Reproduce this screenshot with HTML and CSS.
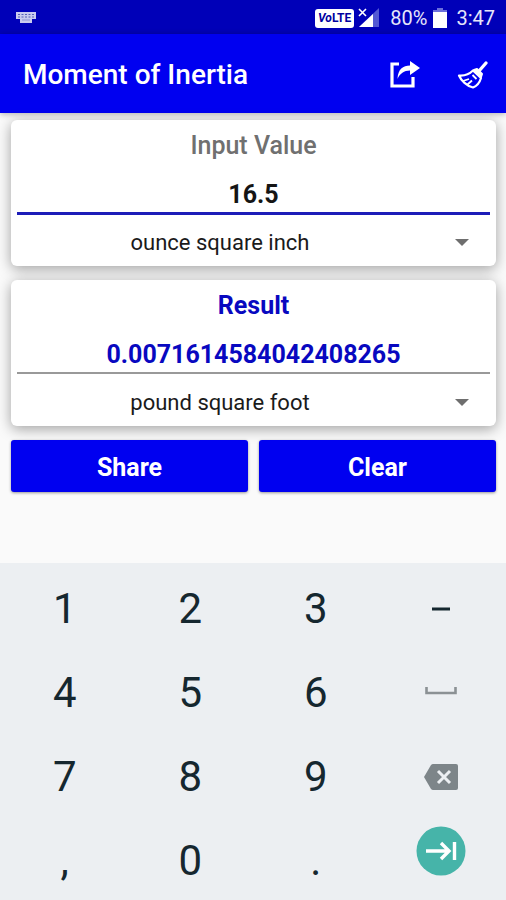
FILE: index.html
```html
<!DOCTYPE html>
<html lang="en">
<head>
<meta charset="utf-8">
<meta name="viewport" content="width=device-width, initial-scale=1">
<title>Moment of Inertia</title>
<link rel="stylesheet" href="styles.css">
</head>
<body>
<div class="status">
  <svg class="status-keyboard" width="20" height="12" viewBox="0 0 20 12" aria-hidden="true"><path d="M0 0h20v7h-4v4H4V7H0z" fill="#c9cbee"/><path d="M2 2.5h16M2 5h16" stroke="#5560b8" stroke-dasharray="2 1.5"/><path d="M6 8h8" stroke="#8f96d4"/></svg>
  <div class="status-right">
    <span class="volte"><i>Vo</i>LTE</span>
    <svg class="signal" width="22" height="22" viewBox="0 0 22 22" aria-hidden="true"><path d="M21 1v19H1z" fill="#5258d4"/><path d="M15 7v13H1z" fill="#fff"/><path d="M1 2l7 7M8 2L1 9" stroke="#fff" stroke-width="1.6"/></svg>
    <span>80%</span>
    <svg class="battery" width="14" height="20" viewBox="0 0 14 20" aria-hidden="true"><path d="M4 0h6v2h4v4H0V2h4z" fill="#6c70dc"/><path d="M0 4h14v16H0z" fill="#fff"/></svg>
    <span>3:47</span>
  </div>
</div>
<header class="appbar">
  <h1>Moment of Inertia</h1>
  <button class="action" type="button" aria-label="Share result"><svg width="32" height="28" viewBox="0 0 32 28"><path d="M10 3H3v22h21v-9" fill="none" stroke="#fff" stroke-width="3.2"/><path d="M8.500 18C9 8 14 4.500 21 4.500V0l10 7-10 7V9.500c-6 0-10 3-12.500 8.500z" fill="#fff"/></svg></button>
  <button class="action" type="button" aria-label="Clear values"><svg width="32" height="30" viewBox="0 0 32 30"><path d="M29 3l-7 8" stroke="#fff" stroke-width="3.400" stroke-linecap="round"/><path d="M17 10l3-1 5 5-1 3z" fill="#fff" stroke="#fff" stroke-width="2" stroke-linejoin="round"/><path d="M16 10.500c-4 4-9 5.500-14 5 2 5 8 10.500 14 12 5-2 7-6 8-9.500z" fill="none" stroke="#fff" stroke-width="2.200" stroke-linejoin="round"/><path d="M6 21l6-2M10.500 24.500l4.500-4M15.500 15l4 4" stroke="#fff" stroke-width="1.800"/></svg></button>
</header>
<main class="content">
  <section class="card">
    <label class="card-title" for="value">Input Value</label>
    <input class="value" id="value" type="text" inputmode="decimal" value="16.5">
    <div class="picker">
      <select aria-label="Input unit"><option>ounce square inch</option><option>pound square foot</option></select>
      <svg width="14" height="8" viewBox="0 0 14 8" aria-hidden="true"><path d="M0 0h14L7 7z" fill="#6e6e6e"/></svg>
    </div>
  </section>
  <section class="card result">
    <label class="card-title" for="result">Result</label>
    <input class="value" id="result" type="text" value="0.0071614584042408265" readonly>
    <div class="picker">
      <select aria-label="Result unit"><option>pound square foot</option><option>ounce square inch</option></select>
      <svg width="14" height="8" viewBox="0 0 14 8" aria-hidden="true"><path d="M0 0h14L7 7z" fill="#6e6e6e"/></svg>
    </div>
  </section>
  <div class="buttons">
    <button type="button">Share</button>
    <button type="button">Clear</button>
  </div>
</main>
<div class="keypad">
  <button type="button">1</button><button type="button">2</button><button type="button">3</button>
  <button type="button" aria-label="Minus"><svg width="18" height="4" viewBox="0 0 18 4"><path d="M0 2h18" stroke="#15272f" stroke-width="3"/></svg></button>
  <button type="button">4</button><button type="button">5</button><button type="button">6</button>
  <button type="button" aria-label="Space"><svg width="32" height="12" viewBox="0 0 32 12"><path d="M1.500 0v6h29V0" fill="none" stroke="#8b9194" stroke-width="2.600"/></svg></button>
  <button type="button">7</button><button type="button">8</button><button type="button">9</button>
  <button type="button" aria-label="Backspace"><svg width="34" height="26" viewBox="0 0 34 26"><path d="M9 0h23q2 0 2 2v22q0 2-2 2H9q-1 0-2-1L0 13 7 1q1-1 2-1z" fill="#7d8589"/><path d="M14 7l12 12M26 7L14 19" stroke="#eceff2" stroke-width="3"/></svg></button>
  <button type="button">,</button><button type="button">0</button><button type="button">.</button>
  <button type="button" class="next" aria-label="Next"><svg width="50" height="50" viewBox="0 0 50 50"><circle cx="25" cy="25" r="24.500" fill="#46b4a9"/><path d="M10 25h22M25 17l8 8-8 8M38.500 16v18" fill="none" stroke="#fff" stroke-width="3.400"/></svg></button>
</div>
</body>
</html>
```
FILE: styles.css
```css
* { box-sizing: border-box; }
body {
  margin: 0;
  min-height: 100vh;
  display: flex;
  flex-direction: column;
  background: #fafafa;
  color: #151515;
  font-family: Roboto, sans-serif;
}
button, input, select { font: inherit; color: inherit; border: 0; margin: 0; padding: 0; border-radius: 0; background: none; }
svg { display: block; }

.status {
  display: flex;
  align-items: center;
  justify-content: space-between;
  height: 34px;
  padding: 2px 11px 0 16px;
  background: #0000b8;
  color: #e6e6fa;
  font-size: 20px;
}
.status-right { display: flex; align-items: center; }
.volte {
  padding: 0 3px;
  margin-right: 4px;
  border-radius: 3px;
  background: #fff;
  color: #0000a0;
  font-size: 12px;
  font-weight: 700;
  line-height: 19px;
}
.signal { margin-right: 10px; }
.battery { margin: 0 9px 0 6px; }

.appbar {
  display: flex;
  align-items: center;
  height: 79px;
  padding: 2px 17px 0 23px;
  gap: 36px;
  background: #0000f0;
  color: #fff;
  box-shadow: 0 1px 6px rgba(0, 0, 0, .3);
}
.appbar h1 { flex: 1; margin: 0; font-size: 28px; font-weight: 500; }

.content { flex: 1; padding: 7px 10px 20px 11px; }
.card {
  margin-bottom: 14px;
  padding: 0 6px;
  border-radius: 6px;
  background: #fff;
  box-shadow: 0 3px 14px rgba(0, 0, 0, .36);
}
.card-title {
  display: block;
  height: 51px;
  line-height: 52px;
  text-align: center;
  font-size: 25px;
  font-weight: 500;
  color: #707070;
}
.value {
  display: block;
  width: 100%;
  height: 44px;
  padding-top: 5px;
  border-bottom: 3px solid #1c1cb8;
  text-align: center;
  font-size: 25px;
  font-weight: 700;
  outline: none;
}
.result .card-title, .result .value { color: #0808c0; font-weight: 700; }
.result .value { border-bottom: 2px solid #999; height: 43px; margin-bottom: 1px; }
.picker { display: grid; align-items: center; }
.picker select {
  grid-area: 1 / 1;
  width: 100%;
  height: 51px;
  padding: 4px 67px 0 0;
  appearance: none;
  text-align-last: center;
  font-size: 22px;
  color: #1a1a1a;
}
.picker svg { grid-area: 1 / 1; justify-self: end; margin: 4px 21px 0 0; pointer-events: none; }

.buttons { display: grid; grid-template-columns: 1fr 1fr; gap: 11px; }
.buttons button {
  height: 52px;
  padding-top: 2px;
  border-radius: 3px;
  background: #0000f0;
  box-shadow: 0 1px 3px rgba(0, 0, 0, .4);
  color: #fff;
  font-size: 25px;
  font-weight: 700;
}

.keypad {
  display: grid;
  grid-template-columns: repeat(4, 1fr);
  grid-auto-rows: 84px;
  padding: 0 2px 1px;
  background: #eceff2;
  color: #15272f;
  font-size: 42px;
}
.keypad button { display: grid; place-items: center; padding-top: 7px; }
.keypad .next { padding: 0 0 12px; }
```
